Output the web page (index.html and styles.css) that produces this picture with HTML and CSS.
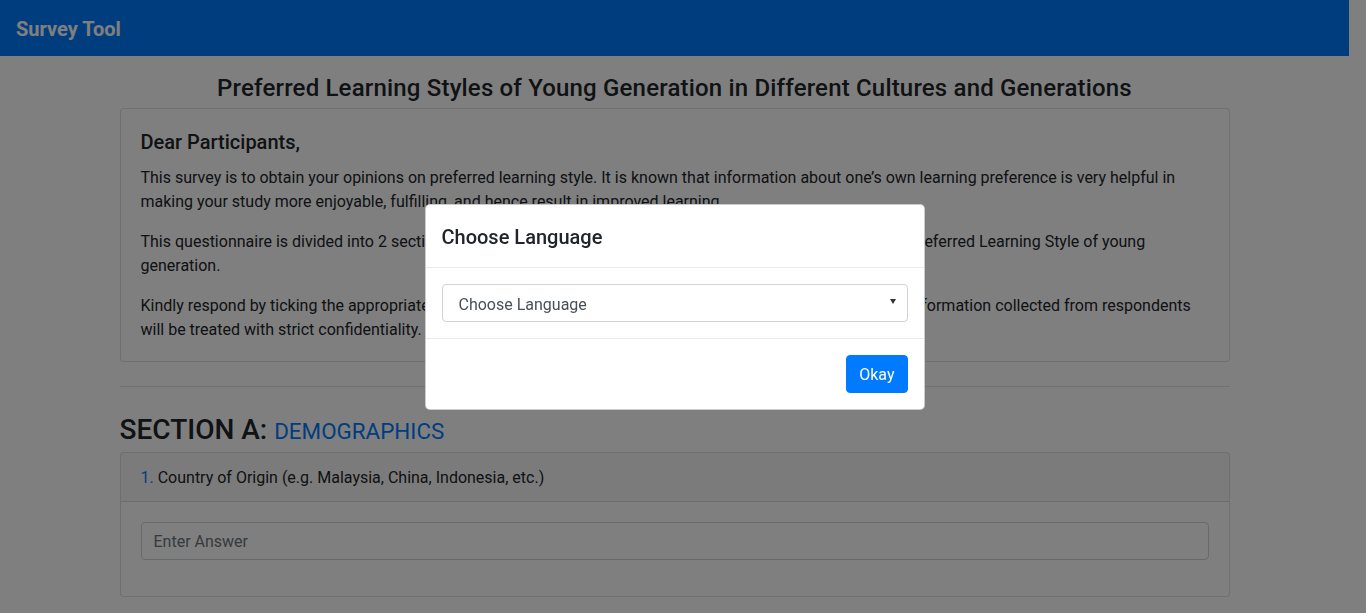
FILE: index.html
```html
<!DOCTYPE html>
<html lang="en">
<head>
<meta charset="utf-8">
<title>Survey Tool</title>
<link rel="stylesheet" href="styles.css">
</head>
<body class="modal-open">
<nav class="navbar">
  <a class="brand" href="#">Survey Tool</a>
</nav>

<main class="container">
  <h4 class="page-title">Preferred Learning Styles of Young Generation in Different Cultures and Generations</h4>

  <section class="card intro">
    <div class="card-body">
      <h5 class="card-title">Dear Participants,</h5>
      <p class="card-text">This survey is to obtain your opinions on preferred learning style. It is known that information about one’s own learning preference is very helpful in making your study more enjoyable, fulfilling, and hence result in improved learning.</p>
      <p class="card-text">This questionnaire is divided into 2 sections: Section A covers your demographic details, and Section B is on Preferred Learning Style of young generation.</p>
      <p class="card-text">Kindly respond by ticking the appropriate answer that best describes you for each of the given questions. All information collected from respondents will be treated with strict confidentiality.</p>
    </div>
  </section>

  <hr class="divider">

  <h3 class="section-title">SECTION A: <small class="section-sub">DEMOGRAPHICS</small></h3>

  <section class="card question">
    <div class="card-header"><span class="q-num">1.</span> Country of Origin (e.g. Malaysia, China, Indonesia, etc.)</div>
    <div class="card-body">
      <div class="form-group">
        <input class="form-control" type="text" placeholder="Enter Answer">
      </div>
    </div>
  </section>
</main>

<div class="backdrop"></div>
<div class="modal">
  <div class="modal-dialog">
    <div class="modal-content">
      <div class="modal-header">
        <h5 class="modal-title">Choose Language</h5>
      </div>
      <div class="modal-body">
        <div class="select-wrap">
          <select class="custom-select">
            <option>Choose Language</option>
            <option>English</option>
            <option>中文</option>
            <option>Bahasa Melayu</option>
          </select>
        </div>
      </div>
      <div class="modal-footer">
        <button class="btn btn-primary" type="button">Okay</button>
      </div>
    </div>
  </div>
</div>
</body>
</html>
```
FILE: styles.css
```css
* { box-sizing: border-box; }

html, body { height: 100%; }

body {
  margin: 0;
  font-family: Roboto, "Liberation Sans", Arial, sans-serif;
  font-size: 16px;
  line-height: 1.5;
  color: #212529;
  background: #fff;
}

body.modal-open {
  overflow: hidden;
  padding-right: 17px;
}

/* Navbar */
.navbar {
  display: flex;
  align-items: center;
  height: 56px;
  padding: 8px 16px;
  background: #007bff;
}

.brand {
  font-size: 20px;
  font-weight: 700;
  line-height: 30px;
  padding: 6px 0 4px;
  color: #fff;
  text-decoration: none;
}

/* Container */
.container {
  max-width: 1140px;
  margin: 0 auto;
  padding: 18px 15px 0;
}

.page-title {
  margin: 0 0 5px;
  font-size: 24px;
  font-weight: 500;
  line-height: 1.2;
  letter-spacing: .18px;
  text-align: center;
}

/* Cards */
.card {
  background: #fff;
  border: 1px solid rgba(0, 0, 0, .125);
  border-radius: 4px;
}

.card-body {
  padding: 20px;
}

.card-title {
  margin: 0 0 12px;
  font-size: 20px;
  font-weight: 500;
  line-height: 1.2;
  padding-top: 1px;
}

.card-text {
  margin: 0 0 16px;
}

.card-text:last-child {
  margin-bottom: 0;
}

.intro .card-body {
  padding-bottom: 19px;
}

.divider {
  margin: 24px 0 26px;
  border: 0;
  border-top: 1px solid rgba(0, 0, 0, .1);
}

.section-title {
  margin: 0 0 6px;
  font-size: 28px;
  font-weight: 500;
  line-height: 1.2;
}

.section-sub {
  font-size: 80%;
  font-weight: 400;
  color: #007bff;
}

.card-header {
  padding: 13px 20px 11px;
  background: rgba(0, 0, 0, .03);
  border-bottom: 1px solid rgba(0, 0, 0, .125);
  line-height: 24px;
}

.q-num {
  color: #007bff;
}

.form-group {
  margin-bottom: 16px;
}

.form-control {
  display: block;
  width: 100%;
  height: 38px;
  padding: 6px 12px;
  font: inherit;
  color: #495057;
  background: #fff;
  border: 1px solid #ced4da;
  border-radius: 4px;
}

.form-control::placeholder {
  color: #6c757d;
}

/* Modal */
.backdrop {
  position: fixed;
  inset: 0;
  background: rgba(0, 0, 0, .5);
  z-index: 10;
}

.modal {
  position: fixed;
  inset: 0;
  padding-right: 17px;
  z-index: 20;
  overflow: hidden;
}

.modal-dialog {
  display: flex;
  align-items: center;
  max-width: 500px;
  min-height: calc(100% - 56px);
  margin: 28px auto;
}

.modal-content {
  width: 100%;
  background: #fff;
  border: 1px solid rgba(0, 0, 0, .2);
  border-radius: 5px;
}

.modal-header {
  padding: 17px 16px 15px;
  border-bottom: 1px solid #e9ecef;
}

.modal-title {
  margin: 0;
  font-size: 20px;
  font-weight: 500;
  line-height: 30px;
}

.modal-body {
  padding: 16px;
}

.select-wrap {
  position: relative;
}

.select-wrap::after {
  content: "";
  position: absolute;
  right: 12px;
  top: 15px;
  border-left: 3.5px solid transparent;
  border-right: 3.5px solid transparent;
  border-top: 5px solid #333;
  pointer-events: none;
}

.custom-select {
  display: block;
  width: 100%;
  height: 38px;
  padding: 8px 28px 4px 16px;
  font: inherit;
  line-height: 24px;
  color: #495057;
  background: #fff;
  border: 1px solid #ced4da;
  border-radius: 4px;
  appearance: none;
  -webkit-appearance: none;
}

.modal-footer {
  display: flex;
  justify-content: flex-end;
  padding: 16px;
  border-top: 1px solid #e9ecef;
}

.btn {
  font: inherit;
  line-height: 24px;
  padding: 7px 12px 5px;
  border: 1px solid transparent;
  border-radius: 4px;
  cursor: pointer;
}

.btn-primary {
  color: #fff;
  background: #007bff;
  border-color: #007bff;
}
```
